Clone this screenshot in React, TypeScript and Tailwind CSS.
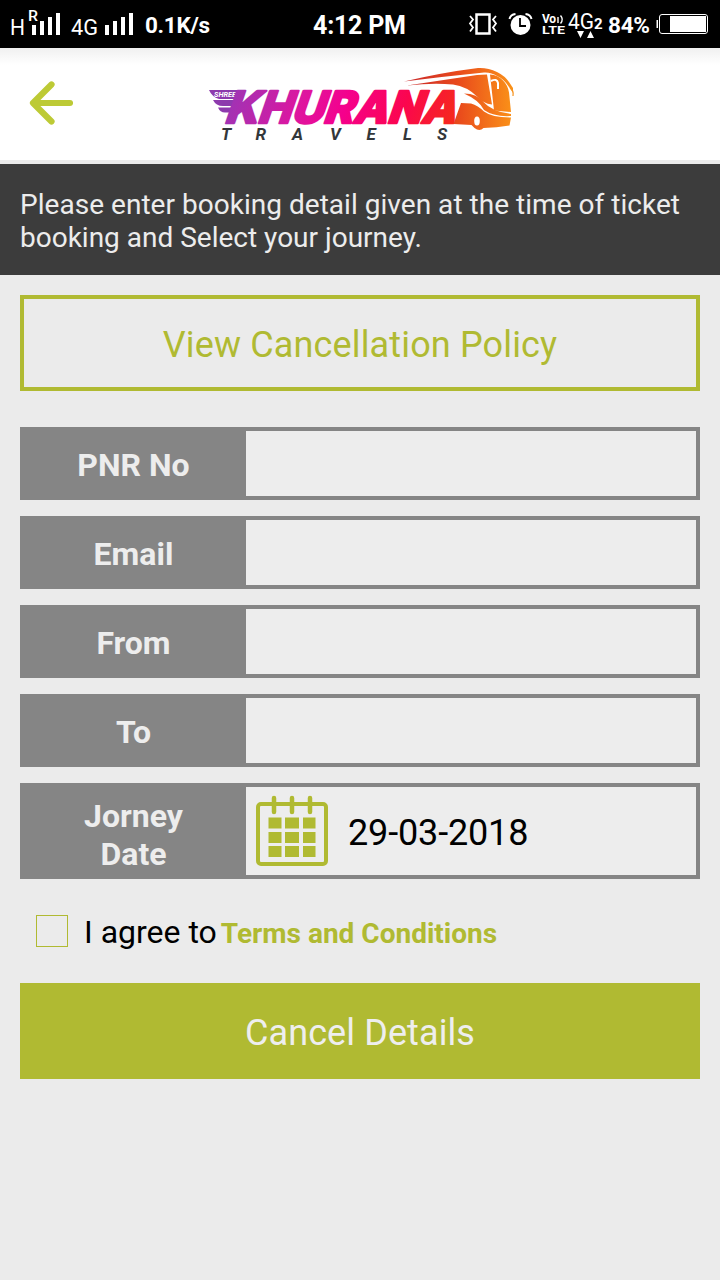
import React, { useState } from "react";

const fields = ["PNR No", "Email", "From", "To"];

const StatusBar: React.FC = () => (
  <div className="h-12 bg-black text-white">
    <svg viewBox="0 0 720 48" className="block h-12 w-full" fill="#fff" fontFamily="Roboto, sans-serif">
      {/* Signal strength */}
      <text x="10" y="35" fontSize="22" textLength="15" lengthAdjust="spacingAndGlyphs">H</text>
      <text x="28" y="21" fontSize="14" fontWeight="500" textLength="10" lengthAdjust="spacingAndGlyphs">R</text>
      <path d="M32 25h4v10h-4zM40 21h4v14h-4zM48 17h4v18h-4zM56 13h4v22h-4z" />
      <text x="71" y="35" fontSize="22" textLength="27" lengthAdjust="spacingAndGlyphs">4G</text>
      <path d="M105 25h4v10h-4zM113 21h4v14h-4zM121 17h4v18h-4zM129 13h4v22h-4z" />
      <text x="145" y="33" fontSize="22.500" fontWeight="700" textLength="65">0.1K/s</text>
      <text x="313" y="34" fontSize="25" fontWeight="700" textLength="93">4:12 PM</text>

      {/* Vibrate */}
      <g fill="none" stroke="#fff">
        <rect x="476.5" y="14.5" width="13" height="19" strokeWidth="2.500" />
        <path d="m470 16 3 3.5-3 4 3 4-3 4M496 16l-3 3.5 3 4-3 4 3 4" strokeWidth="1.8" />
      </g>

      {/* Alarm */}
      <circle cx="520.500" cy="25" r="10" />
      <path d="M509.500 19q1-4.500 6-5M531.500 19q-1-4.500-6-5" fill="none" stroke="#fff" strokeWidth="2" />
      <path d="M520 18v8h6" fill="none" stroke="#000" strokeWidth="1.8" />

      <text x="542" y="23" fontSize="12" fontWeight="700" textLength="14">Vo</text>
      <path d="M558 17v6M560.500 15.500q3.500 4 0 8" fill="none" stroke="#fff" strokeWidth="1.400" />
      <text x="542" y="34" fontSize="11" fontWeight="700" textLength="23" lengthAdjust="spacingAndGlyphs">LTE</text>
      <text x="568" y="29" fontSize="22" textLength="26" lengthAdjust="spacingAndGlyphs">4G</text>
      <text x="594" y="29" fontSize="15" fontWeight="700">2</text>
      <path d="M577 31h7l-3.500 7zM587 38h7l-3.500-7z" />
      <text x="608" y="33" fontSize="22.500" fontWeight="700" textLength="42">84%</text>

      {/* Battery */}
      <rect x="659.500" y="14.500" width="48" height="19" rx="2.500" fill="none" stroke="#fff" />
      <path d="M670 16h36v16h-36zM658 20h-1.500v8h1.500z" />
    </svg>
  </div>
);

const Logo: React.FC = () => (
  <svg width="330" height="90" viewBox="200 60 330 90" aria-label="Shree Khurana Travels">
    <defs>
      <linearGradient id="brand" gradientUnits="userSpaceOnUse" x1="265" y1="0" x2="500" y2="0">
        <stop offset="0" stopColor="#a033b4" />
        <stop offset=".3" stopColor="#dd16a0" />
        <stop offset=".5" stopColor="#f5008c" />
        <stop offset=".75" stopColor="#fb064e" />
        <stop offset="1" stopColor="#f52c18" />
      </linearGradient>
      <linearGradient id="bus" gradientUnits="userSpaceOnUse" x1="405" y1="0" x2="512" y2="0">
        <stop offset="0" stopColor="#c8282b" />
        <stop offset=".5" stopColor="#e94a1c" />
        <stop offset="1" stopColor="#fa9118" />
      </linearGradient>
    </defs>

    {/* Wing */}
    <path d="M209 90h36l-8 9h-18q-7-2-10-9zM213 100h24l-2 6h-12q-7 0-10-6zM218 107.500h16l-2 5h-7q-5 0-7-5z" fill="#8d3aad" />
    <text x="214" y="97" fontFamily="Roboto, sans-serif" fontSize="7.500" fontWeight="700" fontStyle="italic" fill="#fff" textLength="22" lengthAdjust="spacingAndGlyphs">SHREE</text>

    {/* Name, drawn slanted from its baseline */}
    <text
      x="266"
      y="123"
      transform="skewX(-19)"
      fontFamily="Inter, sans-serif"
      fontSize="44"
      fontWeight="800"
      textLength="231"
      lengthAdjust="spacingAndGlyphs"
      fill="url(#brand)"
      stroke="url(#brand)"
      strokeWidth="2.500"
      strokeLinejoin="round"
    >
      KHURANA
    </text>
    <g fontFamily="Roboto, sans-serif" fontSize="17" fontWeight="700" fontStyle="italic" fill="#33373a">
      <text x="221" y="139.500">T</text>
      <text x="255.500" y="139.500">R</text>
      <text x="292" y="139.500">A</text>
      <text x="330" y="139.500">V</text>
      <text x="366.500" y="139.500">E</text>
      <text x="403" y="139.500">L</text>
      <text x="437" y="139.500">S</text>
    </g>

    {/* Roof line, side, windshield, stripe and lower body */}
    <g fill="url(#bus)">
      <path d="M404 81.500q38-9 74-13.500 10-.5 19 4 8 4 12 10l4 6v5l-4-6q-5-8-12-11-6-4-13-3.500-40 4-80 9z" />
      <path d="M407 85.500l70-10.500 10-.5 5 30q-9-1-15-8-10-10-24-12-20-2-46 1z" />
      <path d="M490 74.500q8 .5 13 6 5 5 6 12l2 19.500-17-1.500z" />
      <path d="M464 93.500q13 0 20 9 8 9 27 11.500v2q-17 1-27-6-5-10-20-16.500z" />
      <path d="M461 103l10 .500q7 2 13 8 8 6 27 6l-1.500 8q-13 2-26 2.500-4 4-9 0l-3-3-18-1z" />
    </g>
    <path d="M491 81q6-3 7 2v6" fill="none" stroke="#fff" strokeWidth="2" />
    <path d="M510 88q4 2 3 8" fill="none" stroke="#f6931e" strokeWidth="1.200" />
    <ellipse cx="477" cy="121" rx="2.800" ry="4.500" fill="#fff" />
  </svg>
);

const BackArrow: React.FC = () => (
  <svg width="44" height="48" viewBox="0 0 44 48" fill="none" stroke="#bdca35" strokeWidth="6.200" strokeLinecap="round" strokeLinejoin="round">
    <path d="M22.500 5.500 4 24l18.500 18.500M5 24h36" />
  </svg>
);

const CalendarIcon: React.FC = () => (
  <svg width="72" height="72" viewBox="0 0 72 72">
    <rect x="2" y="9" width="68" height="60" rx="3" fill="none" stroke="#b0ba32" strokeWidth="4" />
    <path d="M18 3v14M36 3v14M54 3v14" stroke="#b0ba32" strokeWidth="4.500" strokeLinecap="round" />
    <path
      d="M12.500 22.500h13v11h-13zM29 22.500h14v11H29zM47 22.500h12.500v11H47zM12.500 37h13v11h-13zM29 37h14v11H29zM47 37h12.500v11H47zM12.500 51h13v11h-13zM29 51h14v11H29zM47 51h12.500v11H47z"
      fill="#b0ba32"
    />
  </svg>
);

export default function App() {
  const [values, setValues] = useState<Record<string, string>>({});
  const [agreed, setAgreed] = useState(false);

  return (
    <div className="flex min-h-screen w-full flex-col bg-[#ebebeb] font-['Roboto',sans-serif]">
      <StatusBar />

      <header className="flex h-28 items-start bg-linear-to-b from-[#f0f0f0] to-white to-15% pl-[29px]">
        <button aria-label="Go back" className="mt-[31px]">
          <BackArrow />
        </button>
        <div className="mt-3 ml-[127px]">
          <Logo />
        </div>
      </header>

      <div className="mt-1 h-[111px] bg-[#3c3c3c] px-5 pt-6 text-[28px] leading-[33px] text-[#ececec]">
        <p className="whitespace-nowrap">
          <span className="tracking-[0.03px]">Please enter booking detail given at the time of ticket</span>
          <br />
          booking and Select your journey.
        </p>
      </div>

      <main className="px-5 pt-5">
        <button className="flex h-24 w-full items-center justify-center border-4 border-[#b0ba32] pt-1 text-4xl tracking-[0.15px] text-[#b0ba32]">
          View Cancellation Policy
        </button>

        <div className="mt-9 flex flex-col gap-4">
          {fields.map((label) => (
            <label key={label} className="flex h-[73px] border-4 border-[#858585] bg-[#ededed]">
              <span className="flex w-[222px] items-center justify-center bg-[#858585] pt-0.5 pr-[3px] text-[32px] font-bold text-[#ededed]">
                {label}
              </span>
              <input
                className="min-w-0 flex-1 bg-transparent px-3 text-4xl outline-none"
                value={values[label] || ""}
                onChange={(e) => setValues({ ...values, [label]: e.target.value })}
              />
            </label>
          ))}

          <div className="flex h-24 border-4 border-[#858585] bg-[#ededed]">
            <span className="flex w-[222px] items-center justify-center bg-[#858585] pt-2 pr-[3px] text-center text-[32px] leading-[38px] font-bold text-[#ededed]">
              Jorney
              <br />
              Date
            </span>
            <div className="flex flex-1 items-center gap-5 pl-2.5">
              <CalendarIcon />
              <span className="pt-1 text-4xl tracking-[-0.15px]">29-03-2018</span>
            </div>
          </div>
        </div>

        <div className="mt-9 flex h-8 items-center pl-4">
          <button
            role="checkbox"
            aria-checked={agreed}
            aria-label="I agree to Terms and Conditions"
            onClick={() => setAgreed(!agreed)}
            className={agreed ? "size-8 border border-[#b0ba32] bg-[#b0ba32]" : "size-8 border border-[#b0ba32]"}
          />
          <span className="ml-4 pt-0.5 text-[32px]">I agree to</span>
          <a className="ml-1 pt-1.5 text-[28px] font-bold text-[#b0ba32]">Terms and Conditions</a>
        </div>

        <button className="mt-9 flex h-24 w-full items-center justify-center bg-[#b0ba32] pt-1 text-4xl tracking-[0.1px] text-[#eeeeee]">
          Cancel Details
        </button>
      </main>
    </div>
  );
}
